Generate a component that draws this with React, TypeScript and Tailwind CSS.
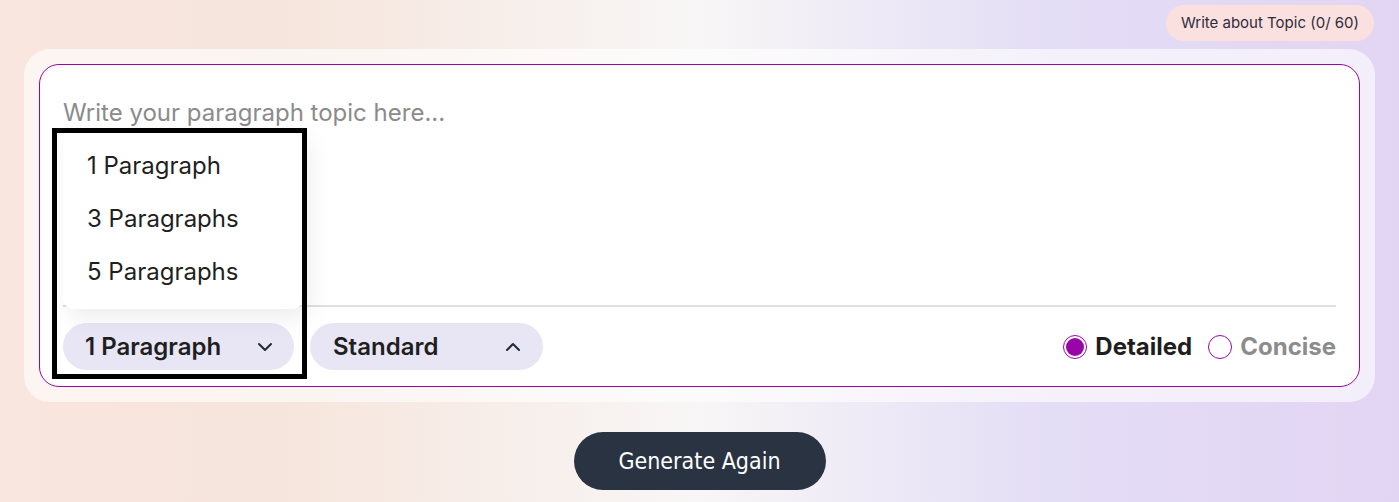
import React, { useState } from "react";

const ChevronDown = () => (
  <svg width="16" height="10" viewBox="0 0 16 10" fill="none" stroke="#1f2937" strokeWidth="2" strokeLinecap="round" strokeLinejoin="round">
    <path d="M2 2l6 6 6-6" />
  </svg>
);

const ChevronUp = () => (
  <svg width="16" height="10" viewBox="0 0 16 10" fill="none" stroke="#1f2937" strokeWidth="2" strokeLinecap="round" strokeLinejoin="round">
    <path d="M2 8l6-6 6 6" />
  </svg>
);

const options = ["1 Paragraph", "3 Paragraphs", "5 Paragraphs"];

const App: React.FC = () => {
  const [mode, setMode] = useState<"detailed" | "concise">("detailed");
  const [count] = useState(options[0]);

  const renderRadio = (value: "detailed" | "concise", label: string) => {
    const active = mode === value;
    return (
      <label className="flex items-center gap-[8px] cursor-pointer" onClick={() => setMode(value)}>
        <span className="w-[24px] h-[24px] rounded-full border border-[#9a05a8] flex items-center justify-center bg-white">
          {active && <span className="w-[18px] h-[18px] rounded-full bg-[#9a05a8]" />}
        </span>
        <span className={`text-[24px] font-bold ${active ? "text-[#1e1e1e]" : "text-[#8c8c8c]"}`}>
          {label}
        </span>
      </label>
    );
  };

  return (
    <div
      className="w-[1399px] h-[502px] overflow-hidden bg-[linear-gradient(90deg,#f9e6df_0%,#f6e5dc_20%,#f8f6f6_50%,#e4ddf6_75%,#e2d5f3_100%)]"
      style={{ fontFamily: "Inter, 'Noto Sans', sans-serif" }}
    >
      <div className="flex justify-end pt-[5px] pr-[25px]">
        <div className="h-[36px] px-[15px] rounded-full bg-[#fbe0e0] flex items-center text-[15px] text-[#2d2d3a]">
          Write about Topic (0/ 60)
        </div>
      </div>

      <div className="mx-[24px] mt-[8px] rounded-[26px] bg-white/60 p-[15px]">
        <div className="relative h-[323px] rounded-[20px] border border-[#9a05a8] bg-white px-[23px] flex flex-col">
          <div className="pt-[32px] text-[24px] leading-[32px] text-[#8b8b8b]">
            Write your paragraph topic here...
          </div>
          <div className="flex-1" />
          <div className="h-[2px] bg-[#e0e0e0]" />
          <div className="flex items-center justify-between pt-[16px] pb-[16px]">
            <div className="flex items-center gap-[16px]">
              <button className="w-[231px] h-[47px] rounded-full bg-[#e8e5f4] flex items-center justify-between pl-[22px] pr-[21px] text-[24px] font-semibold text-[#1f1f1f]">
                {count}
                <ChevronDown />
              </button>
              <button className="w-[233px] h-[47px] rounded-full bg-[#e8e5f4] flex items-center justify-between pl-[23px] pr-[22px] text-[24px] font-semibold text-[#1f1f1f]">
                Standard
                <ChevronUp />
              </button>
            </div>
            <div className="flex items-center gap-[16px]">
              {renderRadio("detailed", "Detailed")}
              {renderRadio("concise", "Concise")}
            </div>
          </div>

          <div className="absolute left-[23px] top-[66px] w-[240px] h-[178px] bg-white rounded-[10px] shadow-[6px_8px_24px_rgba(0,0,0,0.08)] flex flex-col pt-[8px]">
            {options.map((o) => (
              <div key={o} className="h-[53px] flex items-center pl-[24px] text-[24px] text-[#1f1f1f]">
                {o}
              </div>
            ))}
          </div>

          <div className="absolute left-[12px] top-[63px] w-[255px] h-[251px] border-[5px] border-black pointer-events-none" />
        </div>
      </div>

      <div className="flex justify-center pt-[30px]">
        <button
          className="w-[252px] h-[58px] rounded-full bg-[#2a3342] text-white text-[23px]"
          style={{ fontFamily: "'DejaVu Sans Condensed', 'DejaVu Sans', sans-serif" }}
        >
          Generate Again
        </button>
      </div>
    </div>
  );
};

export default App;
